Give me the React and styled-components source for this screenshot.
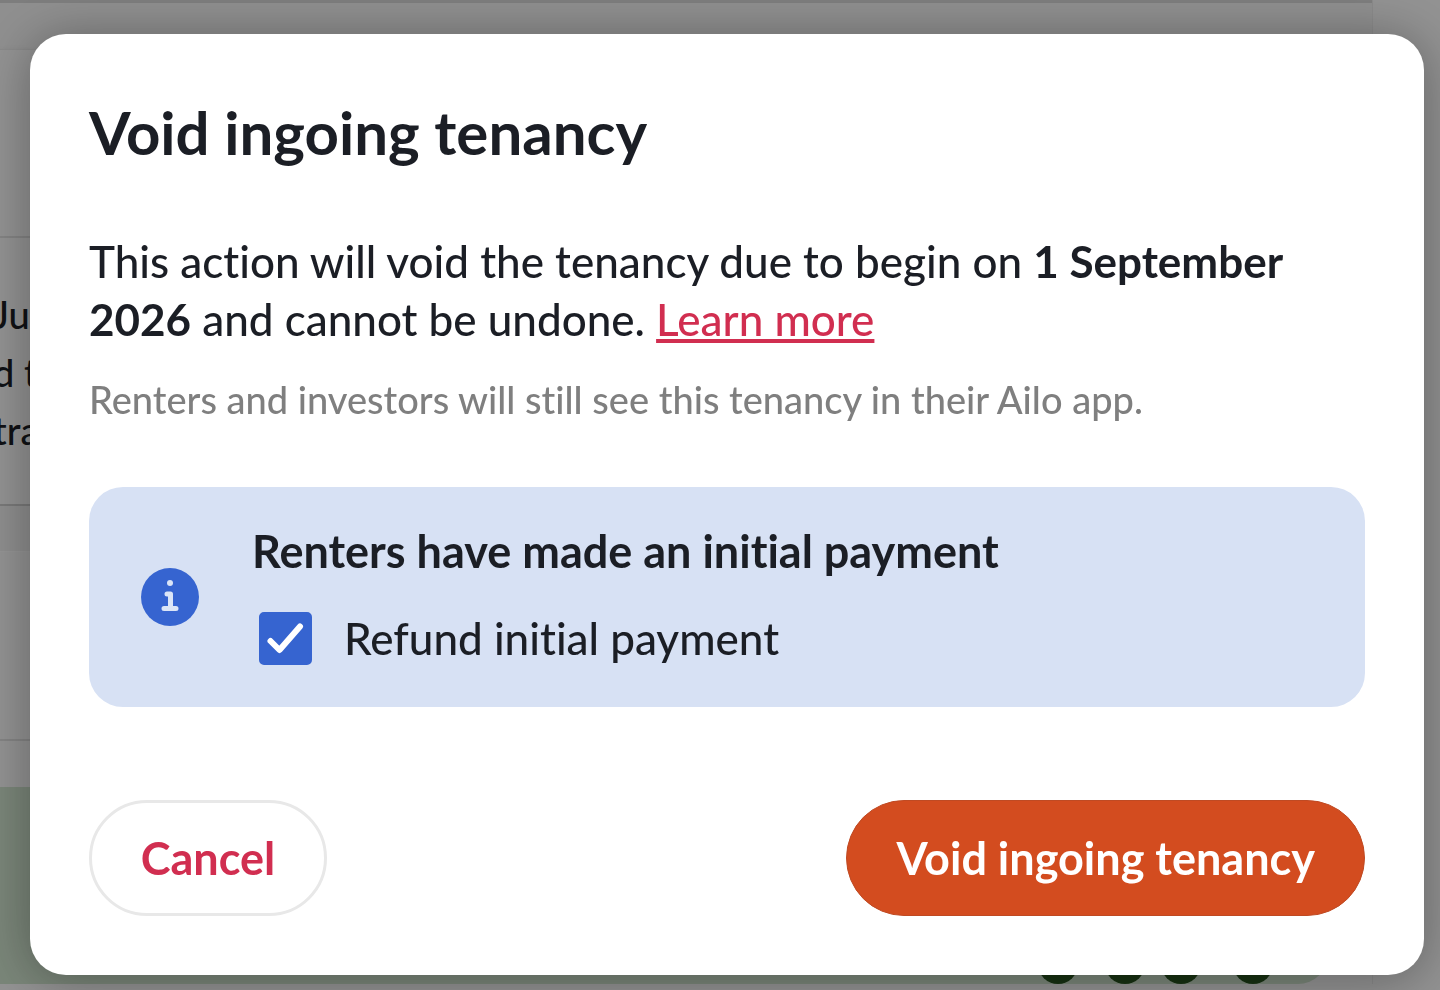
import React, { useState } from 'react';
import styled, { createGlobalStyle } from 'styled-components';

const App = () => {
  const [refund, setRefund] = useState(true);

  return (
    <>
      <GlobalStyle />

      {/* Tenancy page behind the dialog */}
      <Page aria-hidden="true">
        <PageColumn>
          <TopBar />
          <Toolbar />
          <Panel>
            <PanelHeader />
            <PanelText>
              <p>Ju</p>
              <p>d t</p>
              <p>tra</p>
            </PanelText>
          </Panel>
          <PanelGap />
          <Summary />
          <SummaryFooter />
          <GreenBand>
            <Dot $gap={27} />
            <Dot $gap={16} />
            <Dot $gap={32} />
            <Dot $gap={55} />
          </GreenBand>
        </PageColumn>
      </Page>

      <Scrim>
        <Dialog role="dialog" aria-modal="true" aria-labelledby="dialog-title">
          <Title id="dialog-title">Void ingoing tenancy</Title>

          <Body>
            This action will void the tenancy due to begin on <strong>1 September 2026</strong> and
            cannot be undone. <LearnMore href="#learn-more">Learn more</LearnMore>
          </Body>
          <Note>Renters and investors will still see this tenancy in their Ailo app.</Note>

          <Alert>
            <InfoIcon viewBox="0 0 58 58" aria-hidden="true">
              <circle cx="29" cy="29" r="29" fill="#3664d0" />
              <circle cx="29" cy="15" r="3" fill="#dbe5f7" />
              <path
                d="M26 26h3.500v14.500M23 40.500h12"
                fill="none"
                stroke="#dbe5f7"
                strokeWidth="5"
                strokeLinecap="round"
                strokeLinejoin="round"
              />
            </InfoIcon>
            <AlertContent>
              <AlertTitle>Renters have made an initial payment</AlertTitle>
              <CheckRow>
                <CheckBoxWrap>
                  <CheckBox
                    type="checkbox"
                    id="refund"
                    checked={refund}
                    onChange={(e) => setRefund(e.target.checked)}
                  />
                  {refund && (
                    <CheckMark viewBox="0 0 53 53" aria-hidden="true">
                      <path d="M11.500 29 20.500 38 41 14.500" />
                    </CheckMark>
                  )}
                </CheckBoxWrap>
                <label htmlFor="refund">Refund initial payment</label>
              </CheckRow>
            </AlertContent>
          </Alert>

          <Actions>
            <CancelButton type="button">Cancel</CancelButton>
            <VoidButton type="button">Void ingoing tenancy</VoidButton>
          </Actions>
        </Dialog>
      </Scrim>
    </>
  );
};

// Styled Components
const GlobalStyle = createGlobalStyle`
  *, *::before, *::after {
    box-sizing: border-box;
  }

  body {
    margin: 0;
    overflow: hidden;
    background-color: #fff;
    color: #1b1e25;
    font-family: Lato, "Open Sans", sans-serif;
    font-size: 44px;
    font-weight: 500;
    font-variant-ligatures: none;
    line-height: 58px;
  }

  h1, h2, p {
    margin: 0;
  }
`;

const Page = styled.div`
  height: 100vh;
  overflow: hidden;
  padding-right: 67px;
  background-color: #fcfcfc;
`;

const PageColumn = styled.div`
  display: flex;
  flex-direction: column;
  border-right: 1px solid #eee;
`;

const TopBar = styled.div`
  height: 3px;
  background-color: #d8d8d8;
`;

const Toolbar = styled.div`
  height: 46px;
  background-color: #f6f6f6;
`;

const Panel = styled.div`
  height: 457px;
  border-top: 1px solid #ebebeb;
  border-bottom: 2px solid #d0d0d0;
  box-shadow: 0 2px 6px rgba(0, 0, 0, 0.1);
`;

const PanelHeader = styled.div`
  height: 188px;
  border-bottom: 2px solid #e2e2e2;
`;

const PanelText = styled.div`
  padding-top: 47px;
  margin-left: -7px;
  font-size: 38px;
`;

const PanelGap = styled.div`
  height: 45px;
  background-color: #f4f4f4;
`;

const Summary = styled.div`
  height: 190px;
  border-top: 1px solid #fff;
  border-bottom: 2px solid #e2e2e2;
`;

const SummaryFooter = styled.div`
  height: 46px;
`;

const GreenBand = styled.div`
  display: flex;
  justify-content: flex-end;
  align-items: flex-end;
  height: 197px;
  margin-right: 44px;
  border-radius: 0 0 30px 0;
  background-color: #d2e6d0;
`;

const Dot = styled.span`
  width: 40px;
  height: 40px;
  margin-right: ${({ $gap }) => $gap}px;
  border-radius: 50%;
  background-color: #28551f;
`;

const Scrim = styled.div`
  position: fixed;
  inset: 0;
  overflow: auto;
  padding: 34px 16px 15px 30px;
  background-color: rgba(0, 0, 0, 0.42);
`;

const Dialog = styled.section`
  display: flex;
  flex-direction: column;
  padding: 59px;
  border-radius: 36px;
  background-color: #fff;
  box-shadow: 0 4px 52px rgba(0, 0, 0, 0.34);
`;

const Title = styled.h1`
  margin-bottom: 61px;
  font-size: 60px;
  font-weight: 700;
  line-height: 78px;
`;

const Body = styled.p`
  margin-bottom: 22px;

  strong {
    font-weight: 700;
  }
`;

const LearnMore = styled.a`
  color: #d12e50;
  text-decoration: underline;
  text-decoration-thickness: 4px;
  text-underline-offset: 3px;
  text-decoration-skip-ink: none;
`;

const Note = styled.p`
  margin-bottom: 59px;
  color: #7f7f7f;
  font-size: 38px;
`;

const Alert = styled.div`
  display: flex;
  align-items: center;
  gap: 53px;
  margin-bottom: 93px;
  padding: 36px 52px;
  border-radius: 34px;
  background-color: #d7e1f4;
`;

const InfoIcon = styled.svg`
  flex: none;
  width: 58px;
  height: 58px;
`;

const AlertContent = styled.div`
  display: flex;
  flex-direction: column;
  gap: 30px;
  padding-bottom: 4px;
`;

const AlertTitle = styled.h2`
  font-size: 45px;
  font-weight: 700;
  line-height: 56px;
`;

const CheckRow = styled.div`
  display: flex;
  align-items: center;
  gap: 32px;
  padding-left: 7px;
`;

const CheckBoxWrap = styled.span`
  display: grid;

  > * {
    grid-area: 1 / 1;
  }
`;

const CheckBox = styled.input`
  appearance: none;
  width: 53px;
  height: 53px;
  margin: 0;
  border: 3px solid #3664d0;
  border-radius: 5px;
  background-color: #fff;
  cursor: pointer;

  &:checked {
    background-color: #3664d0;
  }
`;

const CheckMark = styled.svg`
  width: 53px;
  height: 53px;
  fill: none;
  stroke: #fff;
  stroke-width: 6;
  stroke-linecap: round;
  stroke-linejoin: round;
  pointer-events: none;
`;

const Actions = styled.div`
  display: flex;
  flex-wrap: wrap;
  justify-content: space-between;
  gap: 24px;
`;

const Button = styled.button`
  height: 116px;
  min-width: 238px;
  padding: 0 47px;
  border: 3px solid transparent;
  border-radius: 58px;
  font: inherit;
  font-size: 45px;
  font-weight: 700;
  cursor: pointer;
`;

const CancelButton = styled(Button)`
  border-color: #e8e8e8;
  background-color: #fff;
  color: #d12e50;
`;

const VoidButton = styled(Button)`
  padding: 0 49px;
  border: 1px solid #bf4a23;
  background-color: #d34c1f;
  color: #fff;
`;

export default App;
